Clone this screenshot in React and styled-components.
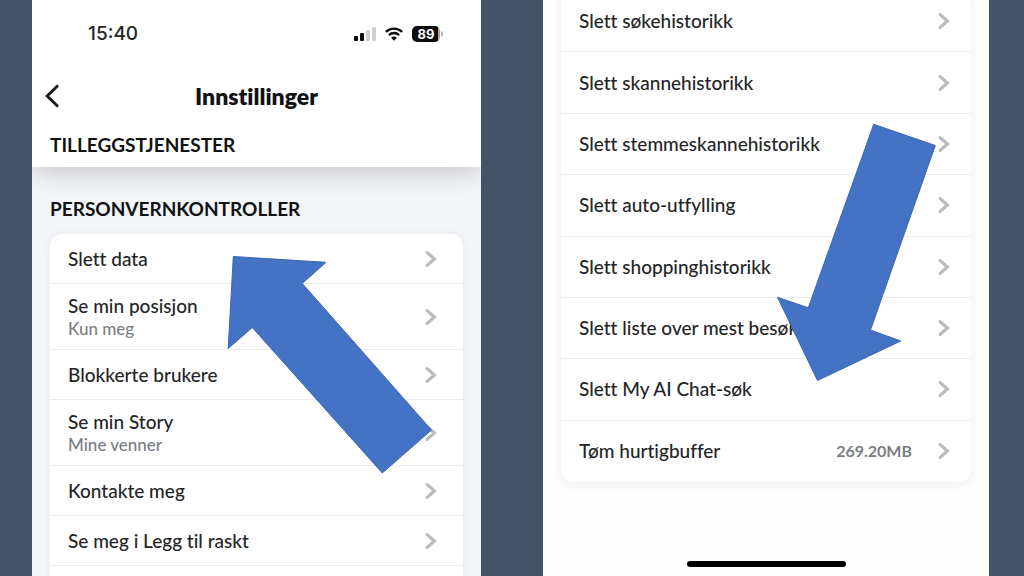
import React from "react";
import styled, { createGlobalStyle } from "styled-components";

const GlobalStyle = createGlobalStyle`
  *, *::before, *::after { box-sizing: border-box; }
  body {
    margin: 0;
    background: #435469;
    font-family: Lato, "Liberation Sans", sans-serif;
    font-variant-ligatures: none;
    color: #242527;
  }
  h1, h2, ul { margin: 0; padding: 0; }
  button { font: inherit; font-variant-ligatures: none; color: inherit; background: none; border: 0; padding: 0; cursor: pointer; }
`;

const Slide = styled.main`
  display: grid;
  grid-template-columns: 449fr 446fr;
  column-gap: 62px;
  height: 100vh;
  padding: 0 35px 0 32px;
  overflow: hidden;
`;

const Phone = styled.section`
  position: relative;
  display: flex;
  flex-direction: column;
  justify-content: ${(p) => (p.$anchor === "bottom" ? "flex-end" : "flex-start")};
  min-width: 0;
  overflow: hidden;
  background: ${(p) => p.$background};
`;

const Header = styled.header`
  flex: none;
  background: #fff;
  box-shadow: 0 2px 28px rgba(0, 0, 0, 0.24);
  padding-bottom: 10px;
`;

const StatusBar = styled.div`
  display: flex;
  align-items: center;
  justify-content: space-between;
  height: 68px;
  padding: 0 38px 0 56px;
`;

const Clock = styled.time`
  font: 500 19px/24px Inter, "Liberation Sans", sans-serif;
`;

const StatusIcons = styled.div`
  display: flex;
  align-items: center;
  gap: 9px;
`;

const Battery = styled.span`
  display: flex;
  align-items: center;
  gap: 1px;
  &::after {
    content: "";
    width: 2px;
    height: 6px;
    border-radius: 0 2px 2px 0;
    background: #b9b9b9;
  }
`;

const BatteryLevel = styled.span`
  width: 28px;
  height: 16px;
  border-radius: 5px;
  background: linear-gradient(to right, #0c0c0c 26px, #a5a5a5 26px);
  color: #fff;
  font: 700 13px/16px Inter, "Liberation Sans", sans-serif;
  text-align: center;
`;

const TitleBar = styled.div`
  display: grid;
  grid-template-columns: 40px 1fr 40px;
  align-items: center;
  height: 56px;
  margin-bottom: 9px;
`;

const BackButton = styled.button`
  display: flex;
  padding-left: 12px;
`;

const Title = styled.h1`
  font-size: 23px;
  line-height: 28px;
  font-weight: 800;
  text-align: center;
  color: #111214;
`;

const SectionTitle = styled.h2`
  padding-left: 18px;
  font-size: 19px;
  line-height: 24px;
  font-weight: 700;
  color: #111214;
`;

const Settings = styled.div`
  flex: none;
  padding: 30px 18px 0;
  ${SectionTitle} { padding-left: 0; margin-bottom: 13px; }
`;

const Card = styled.ul`
  list-style: none;
  border-radius: 12px;
  background: #fff;
  box-shadow: 0 0 8px rgba(40, 40, 60, 0.07);
`;

const TallCard = styled(Card)`
  display: grid;
  grid-auto-rows: 1fr;
  min-height: 491px;
  flex: none;
  margin: 0 18px;
  box-shadow: 0 2px 10px rgba(60, 40, 50, 0.08);
`;

const Item = styled.li`
  border-bottom: 1px solid #ebecee;
  &:last-child { border-bottom: 0; }
`;

const RowButton = styled.button`
  display: flex;
  align-items: center;
  width: 100%;
  height: 100%;
  min-height: ${(p) => (p.$double ? 65 : 49)}px;
  padding: 0 ${(p) => (p.$wide ? 21 : 26)}px 0 18px;
  text-align: left;
`;

const Labels = styled.span`
  flex: 1;
  min-width: 0;
  white-space: nowrap;
`;

const Label = styled.span`
  display: block;
  font-size: 19px;
  line-height: 24px;
  font-weight: 500;
`;

const Detail = styled.span`
  display: block;
  font-size: 17px;
  line-height: 22px;
  font-weight: 500;
  color: #7b7e82;
`;

const Value = styled.span`
  margin-right: 26px;
  font-size: 16px;
  line-height: 24px;
  font-weight: 700;
  color: #7b7e82;
`;

const HomeArea = styled.div`
  flex: none;
  display: flex;
  align-items: flex-end;
  justify-content: center;
  height: 94px;
  padding-bottom: 9px;
`;

const HomeIndicator = styled.span`
  width: 159px;
  height: 6px;
  border-radius: 3px;
  background: #000;
`;

const Pointer = styled.svg`
  position: absolute;
  top: ${(p) => p.$top}px;
  left: ${(p) => p.$left}px;
  pointer-events: none;
  fill: #4472c4;
  stroke: #3d67b1;
  stroke-width: 1;
`;

const Chevron = () => (
  <svg width="12" height="18" viewBox="0 0 12 18" fill="none" stroke="#b9bbbe" strokeWidth="3.2" aria-hidden="true">
    <path d="M2.200 2.600 9.400 9 2.200 15.400" strokeLinecap="round" />
  </svg>
);

const SignalIcon = () => (
  <svg width="22" height="16" viewBox="0 0 22 16" aria-label="Signal">
    <rect x="0" y="10" width="4" height="5" rx="1" fill="#0c0c0c" />
    <rect x="6" y="7" width="4" height="8" rx="1" fill="#0c0c0c" />
    <rect x="12" y="4" width="4" height="11" rx="1" fill="#cfcfcf" />
    <rect x="18" y="1" width="4" height="14" rx="1" fill="#cfcfcf" />
  </svg>
);

const WifiIcon = () => (
  <svg width="18" height="16" viewBox="0 0 18 16" fill="none" stroke="#0c0c0c" strokeWidth="2.3" aria-label="Wi-Fi">
    <path d="M.9 5.9a11.6 11.6 0 0 1 16.2 0" />
    <path d="M3.9 9.1a7.3 7.3 0 0 1 10.2 0" />
    <path d="M9 14.8 6.1 11.8a4.2 4.2 0 0 1 5.8 0Z" fill="#0c0c0c" stroke="none" />
  </svg>
);

const privacyRows = [
  { label: "Slett data" },
  { label: "Se min posisjon", detail: "Kun meg" },
  { label: "Blokkerte brukere" },
  { label: "Se min Story", detail: "Mine venner" },
  { label: "Kontakte meg" },
  { label: "Se meg i Legg til raskt" },
];

const dataRows = [
  { label: "Slett søkehistorikk" },
  { label: "Slett skannehistorikk" },
  { label: "Slett stemmeskannehistorikk" },
  { label: "Slett auto-utfylling" },
  { label: "Slett shoppinghistorikk" },
  { label: "Slett liste over mest besøk" },
  { label: "Slett My AI Chat-søk" },
  { label: "Tøm hurtigbuffer", value: "269.20MB" },
];

const EmptyItem = styled(Item)`
  height: 50px;
`;

const SettingRow = ({ label, detail, value, wide }) => (
  <Item>
    <RowButton type="button" $double={Boolean(detail)} $wide={wide}>
      <Labels>
        <Label>{label}</Label>
        {detail && <Detail>{detail}</Detail>}
      </Labels>
      {value && <Value>{value}</Value>}
      <Chevron />
    </RowButton>
  </Item>
);

export default function App() {
  return (
    <>
      <GlobalStyle />
      <Slide>
        <Phone $background="#f4f5f9">
          <Header>
            <StatusBar>
              <Clock>15:40</Clock>
              <StatusIcons>
                <SignalIcon />
                <WifiIcon />
                <Battery>
                  <BatteryLevel>89</BatteryLevel>
                </Battery>
              </StatusIcons>
            </StatusBar>
            <TitleBar>
              <BackButton type="button" aria-label="Tilbake">
                <svg width="16" height="24" viewBox="0 0 16 24" fill="none" stroke="#1c1d1f" strokeWidth="3">
                  <path d="M13.200 2.200 3.200 12l10 9.800" strokeLinecap="round" />
                </svg>
              </BackButton>
              <Title>Innstillinger</Title>
            </TitleBar>
            <SectionTitle>TILLEGGSTJENESTER</SectionTitle>
          </Header>
          <Settings>
            <SectionTitle>PERSONVERNKONTROLLER</SectionTitle>
            <Card>
              {privacyRows.map((row) => (
                <SettingRow key={row.label} {...row} />
              ))}
              <EmptyItem />
            </Card>
          </Settings>
          <Pointer $top={256} $left={195} width="206" height="219" viewBox="227 256 206 219" aria-hidden="true">
            <path d="M233.300 256.500 326 262.300 302.300 283.500 431.500 430 382.300 473 252.300 327.500 228.200 348.500Z" />
          </Pointer>
        </Phone>
        <Phone $background="#fefefe" $anchor="bottom">
          <TallCard>
            {dataRows.map((row) => (
              <SettingRow key={row.label} wide {...row} />
            ))}
          </TallCard>
          <HomeArea>
            <HomeIndicator />
          </HomeArea>
          <Pointer $top={123} $left={233} width="162" height="260" viewBox="776 123 162 260" aria-hidden="true">
            <path d="M873.700 124.300 935.300 145.500 870.500 330 900.700 341 817.500 380.500 777.500 297.300 808.300 307.700Z" />
          </Pointer>
        </Phone>
      </Slide>
    </>
  );
}
